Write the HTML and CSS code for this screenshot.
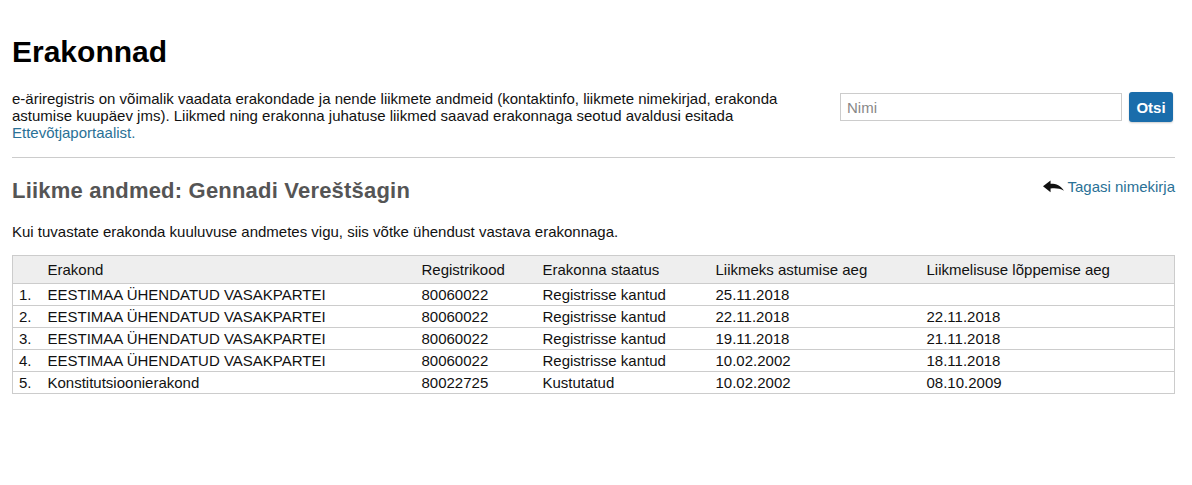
FILE: index.html
```html
<!DOCTYPE html>
<html lang="et">
<head>
<meta charset="utf-8">
<title>Erakonnad</title>
<link rel="stylesheet" href="styles.css">
</head>
<body>
<div class="page">
  <h1 class="title">Erakonnad</h1>
  <div class="intro">
    <p class="intro-text">e-äriregistris on võimalik vaadata erakondade ja nende liikmete andmeid (kontaktinfo, liikmete nimekirjad, erakonda astumise kuupäev jms). Liikmed ning erakonna juhatuse liikmed saavad erakonnaga seotud avaldusi esitada <a href="#" class="link">Ettevõtjaportaalist.</a></p>
    <form class="search">
      <input class="search-input" type="text" placeholder="Nimi">
      <button class="search-btn" type="button">Otsi</button>
    </form>
  </div>
  <hr class="divider">
  <div class="subhead">
    <h2 class="subtitle">Liikme andmed: Gennadi Vereštšagin</h2>
    <a href="#" class="back link">
      <svg class="back-icon" width="21" height="14" viewBox="0 0 20 13"><path d="M0 5.8 L7.2 0.3 L7.2 3.4 C12.5 3.3 16.8 5 20 10 C16 7.9 12 7.5 7.2 8 L7.2 11.4 Z" fill="#111"/></svg>
      Tagasi nimekirja
    </a>
  </div>
  <p class="note">Kui tuvastate erakonda kuuluvuse andmetes vigu, siis võtke ühendust vastava erakonnaga.</p>
  <table class="grid">
    <thead>
      <tr><th class="c-no"></th><th class="c-name">Erakond</th><th class="c-code">Registrikood</th><th class="c-status">Erakonna staatus</th><th class="c-start">Liikmeks astumise aeg</th><th class="c-end">Liikmelisuse lõppemise aeg</th></tr>
    </thead>
    <tbody>
      <tr><td>1.</td><td>EESTIMAA ÜHENDATUD VASAKPARTEI</td><td>80060022</td><td>Registrisse kantud</td><td>25.11.2018</td><td></td></tr>
      <tr><td>2.</td><td>EESTIMAA ÜHENDATUD VASAKPARTEI</td><td>80060022</td><td>Registrisse kantud</td><td>22.11.2018</td><td>22.11.2018</td></tr>
      <tr><td>3.</td><td>EESTIMAA ÜHENDATUD VASAKPARTEI</td><td>80060022</td><td>Registrisse kantud</td><td>19.11.2018</td><td>21.11.2018</td></tr>
      <tr><td>4.</td><td>EESTIMAA ÜHENDATUD VASAKPARTEI</td><td>80060022</td><td>Registrisse kantud</td><td>10.02.2002</td><td>18.11.2018</td></tr>
      <tr><td>5.</td><td>Konstitutsioonierakond</td><td>80022725</td><td>Kustutatud</td><td>10.02.2002</td><td>08.10.2009</td></tr>
    </tbody>
  </table>
</div>
</body>
</html>
```
FILE: styles.css
```css
* { box-sizing: border-box; }
body {
  margin: 0;
  background: #fff;
  color: #111;
  font-family: "Liberation Sans", Arial, sans-serif;
  font-size: 15px;
}
.page {
  width: 1163px;
  margin-left: 12px;
  padding-top: 35px;
}
.title {
  margin: 0;
  font-size: 30px;
  font-weight: bold;
  line-height: 34px;
  color: #000;
}
.intro {
  display: flex;
  justify-content: space-between;
  align-items: flex-start;
  margin-top: 21px;
}
.intro-text {
  margin: 0;
  width: 790px;
  line-height: 17px;
}
.link { color: #2a7196; text-decoration: none; }
.search {
  display: flex;
  gap: 7px;
  margin-top: 3px;
  margin-right: 2px;
}
.search-input {
  width: 282px;
  height: 28px;
  border: 1px solid #ccc;
  padding: 0 6px;
  font-family: inherit;
  font-size: 15px;
  color: #333;
}
.search-input::placeholder { color: #888; }
.search-btn {
  width: 44px;
  height: 30px;
  margin-top: -1px;
  border: none;
  border-radius: 3px;
  background: #1a6dab;
  box-shadow: 0 1px 2px rgba(0,0,0,0.2);
  color: #fff;
  font-family: inherit;
  font-weight: bold;
  font-size: 15px;
  padding: 0;
}
.divider {
  margin: 16px 0 0;
  border: none;
  border-top: 1px solid #ccc;
}
.subhead {
  display: flex;
  justify-content: space-between;
  align-items: flex-start;
  margin-top: 20px;
}
.subtitle {
  margin: 0;
  font-size: 22px;
  letter-spacing: 0.2px;
  line-height: 26px;
  color: #555;
}
.back {
  display: flex;
  align-items: center;
  gap: 3px;
  margin-top: 0;
}
.back-icon { display: block; }
.note {
  margin: 19px 0 0;
  line-height: 17px;
}
.grid {
  margin-top: 15px;
  width: 100%;
  border-collapse: collapse;
  border: 1px solid #ccc;
}
.grid th {
  background: #eee;
  font-weight: normal;
  text-align: left;
  height: 28px;
  padding: 0 6px;
}
.grid td {
  height: 22px;
  padding: 0 6px;
  border-top: 1px solid #ccc;
}
.c-no { width: 29px; }
.c-name { width: 374px; }
.c-code { width: 121px; }
.c-status { width: 173px; }
.c-start { width: 211px; }
```
